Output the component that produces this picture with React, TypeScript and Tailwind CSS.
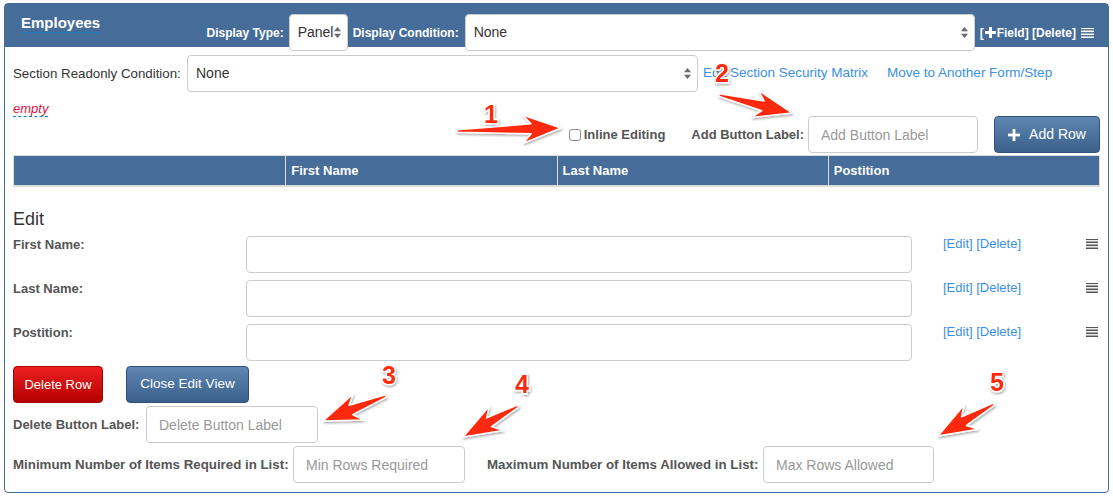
import React from 'react';

const SANS = "font-['Liberation_Sans',Arial,sans-serif]";

function SelectArrows() {
  return (
    <svg width="7" height="11" viewBox="0 0 7 11" className="shrink-0">
      <path d="M3.5 0 L7 4.2 L0 4.2 Z" fill="#6b6b6b" />
      <path d="M0 6.8 L7 6.8 L3.5 11 Z" fill="#6b6b6b" />
    </svg>
  );
}

function FakeSelect({ value, className }: { value: string; className: string }) {
  return (
    <div
      className={`flex h-[37px] shrink-0 items-center justify-between rounded-[4px] border border-[#ccc] bg-white pl-[8px] pr-[6px] text-[14px] text-[#333] ${className}`}
    >
      <span>{value}</span>
      <SelectArrows />
    </div>
  );
}

function Lines({ color, width }: { color: string; width: number }) {
  return (
    <svg width={width} height="10" viewBox={`0 0 ${width} 10`} className="shrink-0">
      {[0, 3, 6, 9].map((y) => (
        <rect key={y} x="0" y={y - 0.5} width={width} height="1.6" fill={color} />
      ))}
    </svg>
  );
}

function TextInput({ placeholder, className }: { placeholder?: string; className: string }) {
  return (
    <input
      placeholder={placeholder}
      className={`h-[37px] shrink-0 rounded-[4px] border border-[#ccc] bg-white pl-[12px] text-[14px] text-[#333] outline-none placeholder:text-[#999] ${className}`}
    />
  );
}

// annotation arrow from tail to tip
function arrowPoints(x1: number, y1: number, x2: number, y2: number) {
  const dx = x2 - x1;
  const dy = y2 - y1;
  const L = Math.hypot(dx, dy);
  const ux = dx / L;
  const uy = dy / L;
  const nx = -uy;
  const ny = ux;
  const h = 30;
  const p = (a: number, b: number) => `${x1 + ux * a + nx * b},${y1 + uy * a + ny * b}`;
  return [p(0, -1.2), p(L - h, -5), p(L - h - 8, -14), p(L, 0), p(L - h - 8, 14), p(L - h, 5), p(0, 1.2)].join(' ');
}

const arrows = [
  { n: '1', tx: 491, ty: 123, a: [457, 131, 561, 128] },
  { n: '2', tx: 722, ty: 82, a: [719, 95, 792, 113] },
  { n: '3', tx: 389, ty: 384, a: [386, 396, 323, 421] },
  { n: '4', tx: 522, ty: 393, a: [518, 406, 463, 437] },
  { n: '5', tx: 997, ty: 391, a: [994, 404, 938, 436] },
];

function Annotations() {
  return (
    <svg className="pointer-events-none absolute left-0 top-0" width="1113" height="499">
      <defs>
        <filter id="sh" x="-20%" y="-20%" width="140%" height="140%">
          <feDropShadow dx="0.8" dy="1.5" stdDeviation="1.2" floodColor="#000" floodOpacity="0.35" />
        </filter>
      </defs>
      {arrows.map((r) => (
        <g key={r.n} filter="url(#sh)">
          <polygon
            points={arrowPoints(r.a[0], r.a[1], r.a[2], r.a[3])}
            fill="#ff2b0b"
            stroke="#fff"
            strokeWidth="1.5"
            strokeLinejoin="round"
          />
          <text
            x={r.tx}
            y={r.ty}
            textAnchor="middle"
            fontSize="25"
            fontWeight="700"
            fontFamily="'Liberation Sans', Arial, sans-serif"
            fill="#ff2b0b"
            stroke="#fff"
            strokeWidth="3"
            paintOrder="stroke"
          >
            {r.n}
          </text>
        </g>
      ))}
    </svg>
  );
}

const fields = ['First Name:', 'Last Name:', 'Postition:'];

export default function App() {
  return (
    <div className={`relative h-[499px] w-[1113px] overflow-hidden bg-white ${SANS}`}>
      <div className="ml-[4px] mt-[3px] w-[1105px] rounded-[4px] border border-[#466d99]">
        {/* header */}
        <div className="flex h-[43px] items-start bg-[#466d99] pl-[16px] pr-[14px] pt-[10px]">
          <span className="border-b border-dashed border-[#0088cc] text-[15px] font-bold leading-[18px] text-white">
            Employees
          </span>
          <div className="ml-auto flex items-center">
            <span className="text-[12px] font-bold text-white">Display Type:</span>
            <FakeSelect value="Panel" className="ml-[5px] w-[59px]" />
            <span className="ml-[5px] w-[106px] text-[12px] font-bold text-white">Display Condition:</span>
            <FakeSelect value="None" className="ml-[6px] w-[510px]" />
            <span className="ml-[5px] flex items-center text-[12px] font-bold text-white">
              [
              <svg width="11" height="11" viewBox="0 0 11 11" className="mx-[1px]">
                <rect x="4" y="0" width="3" height="11" fill="#fff" />
                <rect x="0" y="4" width="11" height="3" fill="#fff" />
              </svg>
              Field] [Delete]
            </span>
            <span className="ml-[5px]">
              <Lines color="#fff" width={13} />
            </span>
          </div>
        </div>

        {/* body */}
        <div className="px-[8px] pb-[9px]">
          <div className="mt-[8px] flex h-[37px] items-center text-[13px]">
            <span className="w-[174px] shrink-0 whitespace-nowrap text-[13.3px] text-[#333]">Section Readonly Condition:</span>
            <FakeSelect value="None" className="w-[511px]" />
            <span className="ml-[5px] text-[13.5px] text-[#3b8fe4]">Edit Section Security Matrix</span>
            <span className="ml-[19px] text-[13.5px] text-[#3b8fe4]">Move to Another Form/Step</span>
          </div>

          <div className="h-[24px] pt-[4px]">
            <span className="border-b border-dashed border-[#0088cc] text-[13px] italic leading-[16px] text-[#dd1144]">
              empty
            </span>
          </div>

          <div className="flex h-[37px] items-center justify-end text-[13px] font-bold text-[#555]">
            <span className="mr-[3px] h-[12px] w-[12px] rounded-[3px] border border-[#8a8a8a] bg-white" />
            <span>Inline Editing</span>
            <span className="ml-[26px]">Add Button Label:</span>
            <TextInput placeholder="Add Button Label" className="ml-[4px] w-[170px] font-normal" />
            <button className="ml-[16px] flex h-[37px] w-[106px] items-center justify-center gap-[9px] rounded-[4px] border border-[#30527a] bg-linear-to-b from-[#5f87b1] to-[#3a5f8b] text-[14px] font-normal text-white">
              <svg width="12" height="12" viewBox="0 0 12 12">
                <rect x="4.6" y="0" width="2.8" height="12" fill="#fff" />
                <rect x="0" y="4.6" width="12" height="2.8" fill="#fff" />
              </svg>
              Add Row
            </button>
          </div>

          <div className="mt-[2px] grid h-[32px] grid-cols-4 border border-b-2 border-[#ddd] bg-[#466d99] text-[13px] font-bold text-white">
            <div />
            <div className="flex items-center border-l border-[#ddd] pl-[5px]">First Name</div>
            <div className="flex items-center border-l border-[#ddd] pl-[5px]">Last Name</div>
            <div className="flex items-center border-l border-[#ddd] pl-[5px]">Postition</div>
          </div>

          <h3 className="mt-[21px] text-[18px] leading-[22px] text-[#333]">Edit</h3>

          <div className="mt-[6px] flex flex-col gap-[7px]">
            {fields.map((f) => (
              <div key={f} className="flex items-start">
                <span className="w-[233px] pt-[1px] text-[13px] font-bold leading-[16px] text-[#555]">{f}</span>
                <TextInput className="w-[666px]" />
                <span className="ml-[31px] text-[13px] leading-[16px] text-[#3b8fe4]">[Edit] [Delete]</span>
                <span className="ml-auto mr-[2px] mt-[3px]">
                  <Lines color="#555" width={12} />
                </span>
              </div>
            ))}
          </div>

          <div className="mt-[5px] flex items-center">
            <button className="flex h-[37px] w-[90px] items-center justify-center rounded-[4px] border border-[#a30000] bg-linear-to-b from-[#ec1e1e] to-[#b50000] text-[13px] text-white">
              Delete Row
            </button>
            <button className="ml-[23px] flex h-[37px] w-[123px] items-center justify-center rounded-[4px] border border-[#30527a] bg-linear-to-b from-[#5f87b1] to-[#3a5f8b] text-[13.5px] text-white">
              Close Edit View
            </button>
          </div>

          <div className="mt-[3px] flex items-center text-[13px] font-bold text-[#555]">
            <span className="w-[129px]">Delete Button Label:</span>
            <TextInput placeholder="Delete Button Label" className="ml-[4px] w-[172px] font-normal" />
          </div>

          <div className="mt-[3px] flex items-center text-[13px] font-bold text-[#555]">
            <span className="w-[276px] whitespace-nowrap text-[13.3px]">Minimum Number of Items Required in List:</span>
            <TextInput placeholder="Min Rows Required" className="ml-[4px] w-[172px] font-normal" />
            <span className="ml-[22px] w-[272px] whitespace-nowrap text-[13.3px]">Maximum Number of Items Allowed in List:</span>
            <TextInput placeholder="Max Rows Allowed" className="ml-[4px] w-[171px] font-normal" />
          </div>
        </div>
      </div>
      <Annotations />
    </div>
  );
}
